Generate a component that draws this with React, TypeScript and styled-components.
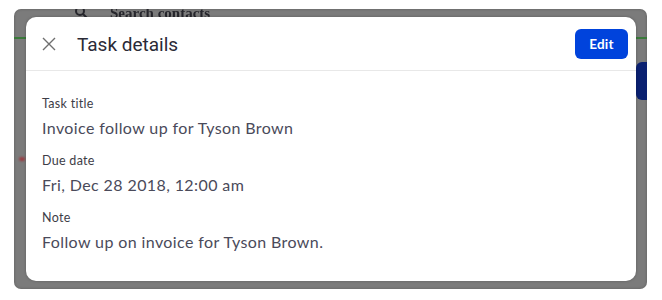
import React from "react";
import styled, { createGlobalStyle } from "styled-components";

const Global = createGlobalStyle`
  html, body { margin: 0; padding: 0; background: #ffffff; }
  body { font-family: "Lato", "Noto Sans", sans-serif; }
`;

const Page = styled.div`
  width: 662px;
  height: 300px;
  padding: 9px 0 0 14px;
  box-sizing: border-box;
`;

const Backdrop = styled.div`
  position: relative;
  width: 633px;
  height: 280px;
  background: #7b7b7b;
  border-radius: 7px;
  overflow: hidden;
  box-shadow: inset 0 0 3px rgba(0, 0, 0, 0.25);
`;

const AppLayer = styled.div`
  display: flex;
  flex-direction: column;
  height: 100%;
`;

const SearchBar = styled.div`
  display: flex;
  align-items: center;
  gap: 22px;
  height: 14px;
  padding-left: 60px;
  margin-top: -3px;
  color: #26262c;
  font-family: "Liberation Serif", serif;
  font-size: 15px;
  font-weight: 700;
  filter: blur(0.6px);
`;

const GreenRule = styled.div`
  height: 2px;
  margin-top: 17px;
  background: #3a7a3a;
`;

const SideRow = styled.div`
  display: flex;
  justify-content: flex-end;
  margin-top: 23px;
`;

const BlueTab = styled.div`
  width: 11px;
  height: 38px;
  background: #0a2070;
  border-radius: 6px 0 0 6px;
`;

const RedDot = styled.div`
  width: 6px;
  height: 4px;
  margin: 57px 0 0 5px;
  background: #9a3a40;
  border-radius: 50%;
  filter: blur(0.8px);
`;

const Dialog = styled.div`
  position: absolute;
  left: 12px;
  top: 8px;
  width: 610px;
  height: 264px;
  background: #ffffff;
  border-radius: 10px;
  display: flex;
  flex-direction: column;
  box-shadow: 0 0 3px rgba(0, 0, 0, 0.25);
`;

const Header = styled.div`
  display: flex;
  align-items: center;
  height: 53px;
  padding: 0 8px 0 16px;
  border-bottom: 1px solid #e8e8e8;
`;

const CloseButton = styled.button`
  display: flex;
  align-items: center;
  justify-content: center;
  width: 14px;
  height: 14px;
  padding: 0;
  border: none;
  background: none;
  color: #6f6f6f;
  cursor: pointer;
`;

const Title = styled.h2`
  flex: 1;
  margin: 2px 0 0 21px;
  font-family: "Roboto", sans-serif;
  font-weight: 400;
  font-size: 19px;
  color: #2a2a36;
`;

const EditButton = styled.button`
  width: 53px;
  height: 30px;
  border: none;
  border-radius: 6px;
  background: #0043dc;
  color: #ffffff;
  font-family: "Lato", sans-serif;
  font-size: 13.5px;
  font-weight: 700;
  letter-spacing: 0.2px;
  cursor: pointer;
`;

const Body = styled.div`
  display: flex;
  flex-direction: column;
  padding: 25px 16px 0 16px;
`;

const Field = styled.div`
  display: flex;
  flex-direction: column;
  gap: 6px;
  margin-bottom: 15px;
`;

const Label = styled.div`
  font-size: 12.5px;
  line-height: 16px;
  letter-spacing: 0.3px;
  color: #3d3d47;
`;

const Value = styled.div`
  font-size: 16px;
  line-height: 20px;
  letter-spacing: 0.4px;
  color: #4a4a5a;
`;

const fields = [
  { label: "Task title", value: "Invoice follow up for Tyson Brown" },
  { label: "Due date", value: "Fri, Dec 28 2018, 12:00 am" },
  { label: "Note", value: "Follow up on invoice for Tyson Brown." },
];

export default function App() {
  return (
    <>
      <Global />
      <Page>
        <Backdrop>
          <AppLayer>
            <SearchBar>
              <svg width="14" height="12" viewBox="0 0 14 12">
                <circle cx="6" cy="4" r="4" fill="none" stroke="#26262c" strokeWidth="2" />
                <path d="M9 7 L13 11" stroke="#26262c" strokeWidth="2" />
              </svg>
              <span>Search contacts</span>
            </SearchBar>
            <GreenRule />
            <SideRow>
              <BlueTab />
            </SideRow>
            <RedDot />
          </AppLayer>
          <Dialog>
            <Header>
              <CloseButton aria-label="Close">
                <svg width="14" height="14" viewBox="0 0 14 14">
                  <path d="M1 1 L13 13 M13 1 L1 13" stroke="currentColor" strokeWidth="1.4" />
                </svg>
              </CloseButton>
              <Title>Task details</Title>
              <EditButton>Edit</EditButton>
            </Header>
            <Body>
              {fields.map((f) => (
                <Field key={f.label}>
                  <Label>{f.label}</Label>
                  <Value>{f.value}</Value>
                </Field>
              ))}
            </Body>
          </Dialog>
        </Backdrop>
      </Page>
    </>
  );
}
